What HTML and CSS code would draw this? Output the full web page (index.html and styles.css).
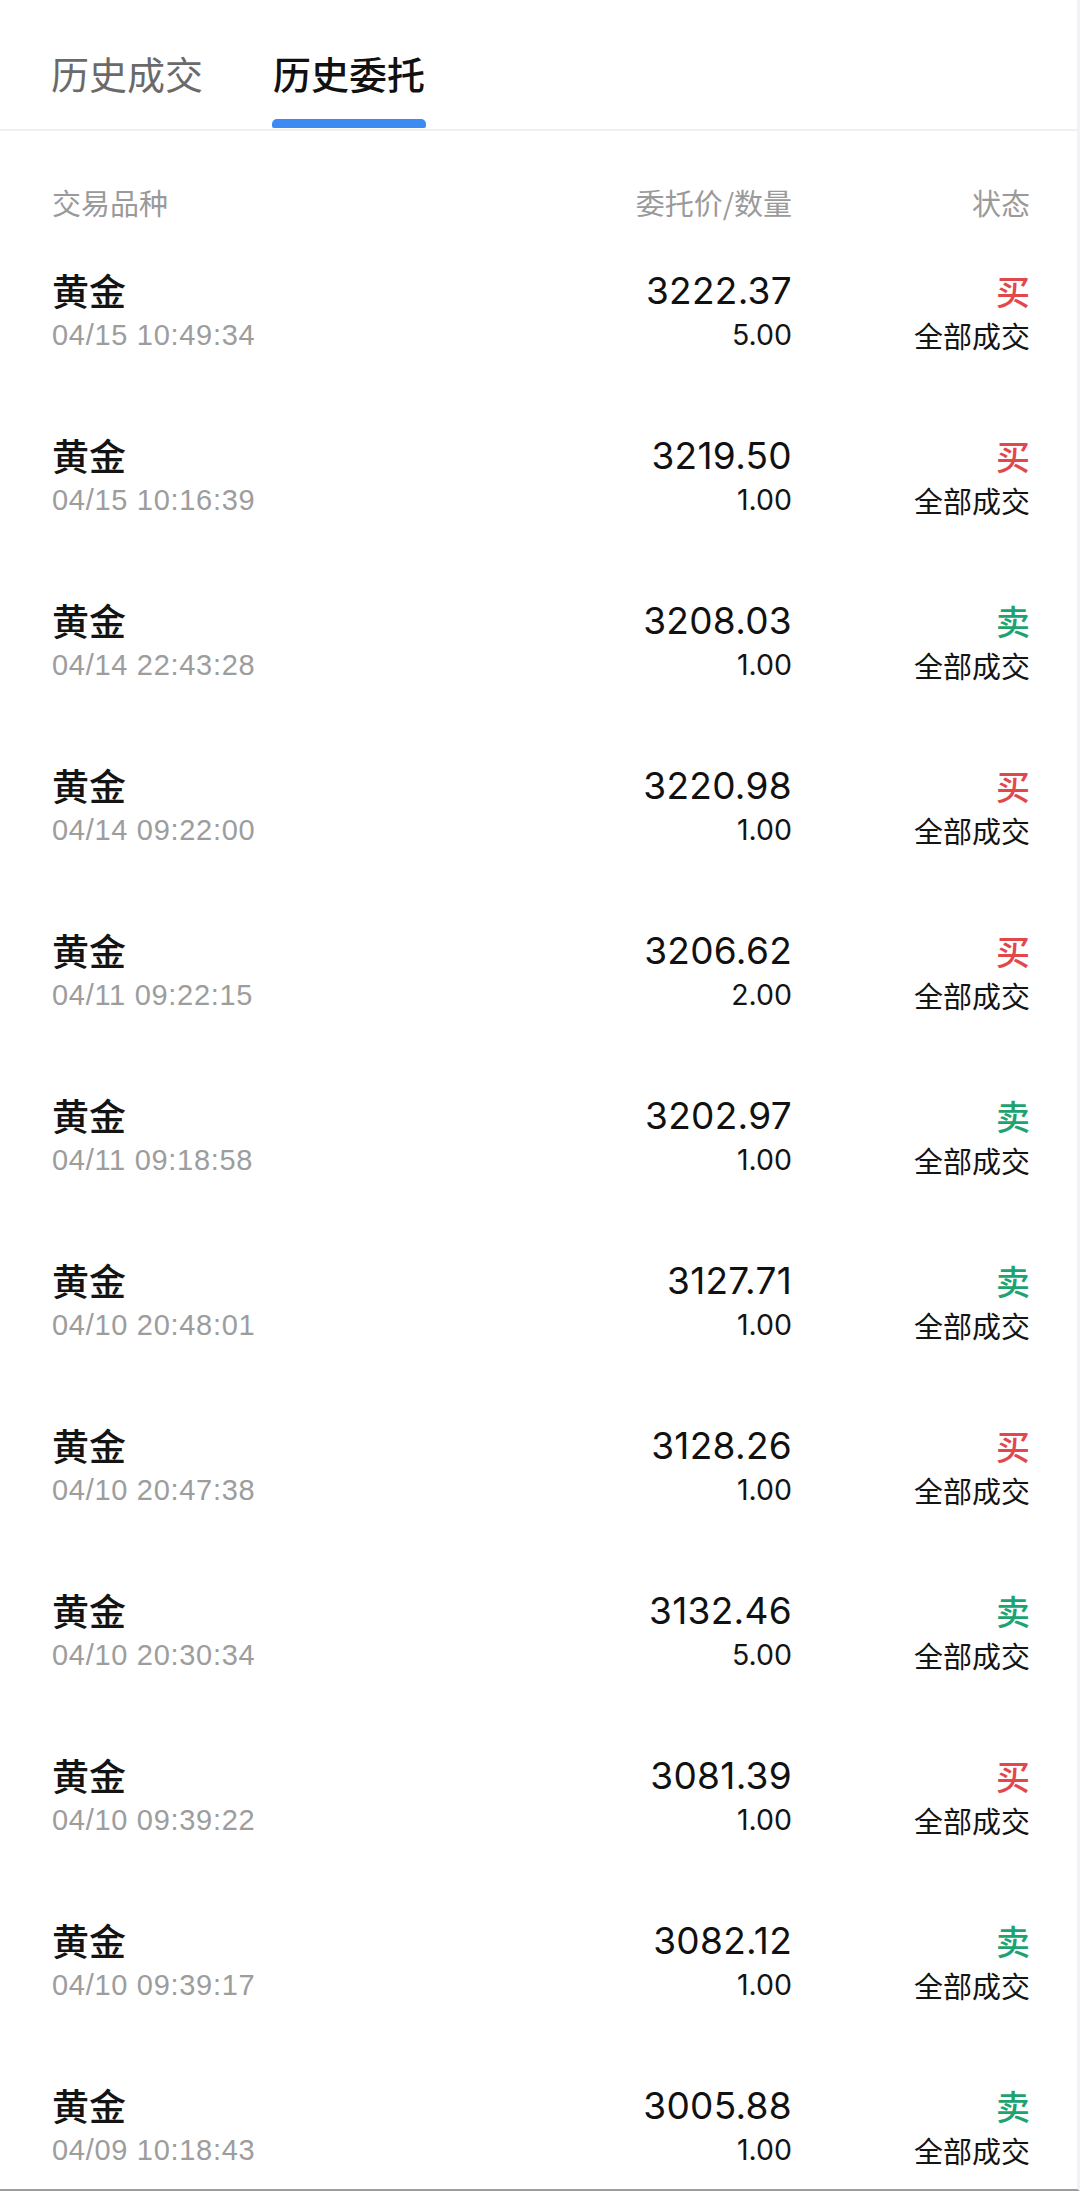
FILE: index.html
```html
<!DOCTYPE html>
<html lang="zh-CN">
<head>
<meta charset="utf-8">
<title>历史委托</title>
<link rel="stylesheet" href="styles.css">
</head>
<body>
<div class="page">
  <div class="tabs">
    <div class="tab"><span class="tab-label">历史成交</span></div>
    <div class="tab active"><span class="tab-label">历史委托</span><span class="tab-bar"></span></div>
  </div>
  <div class="list-head">
    <div class="col-name">交易品种</div>
    <div class="col-price">委托价/数量</div>
    <div class="col-status">状态</div>
  </div>
  <div class="list">
    <div class="row">
      <div class="name">黄金</div><div class="price">3222.37</div><div class="side buy">买</div>
      <div class="time">04/15 10:49:34</div><div class="qty">5.00</div><div class="state">全部成交</div>
    </div>
    <div class="row">
      <div class="name">黄金</div><div class="price">3219.50</div><div class="side buy">买</div>
      <div class="time">04/15 10:16:39</div><div class="qty">1.00</div><div class="state">全部成交</div>
    </div>
    <div class="row">
      <div class="name">黄金</div><div class="price">3208.03</div><div class="side sell">卖</div>
      <div class="time">04/14 22:43:28</div><div class="qty">1.00</div><div class="state">全部成交</div>
    </div>
    <div class="row">
      <div class="name">黄金</div><div class="price">3220.98</div><div class="side buy">买</div>
      <div class="time">04/14 09:22:00</div><div class="qty">1.00</div><div class="state">全部成交</div>
    </div>
    <div class="row">
      <div class="name">黄金</div><div class="price">3206.62</div><div class="side buy">买</div>
      <div class="time">04/11 09:22:15</div><div class="qty">2.00</div><div class="state">全部成交</div>
    </div>
    <div class="row">
      <div class="name">黄金</div><div class="price">3202.97</div><div class="side sell">卖</div>
      <div class="time">04/11 09:18:58</div><div class="qty">1.00</div><div class="state">全部成交</div>
    </div>
    <div class="row">
      <div class="name">黄金</div><div class="price">3127.71</div><div class="side sell">卖</div>
      <div class="time">04/10 20:48:01</div><div class="qty">1.00</div><div class="state">全部成交</div>
    </div>
    <div class="row">
      <div class="name">黄金</div><div class="price">3128.26</div><div class="side buy">买</div>
      <div class="time">04/10 20:47:38</div><div class="qty">1.00</div><div class="state">全部成交</div>
    </div>
    <div class="row">
      <div class="name">黄金</div><div class="price">3132.46</div><div class="side sell">卖</div>
      <div class="time">04/10 20:30:34</div><div class="qty">5.00</div><div class="state">全部成交</div>
    </div>
    <div class="row">
      <div class="name">黄金</div><div class="price">3081.39</div><div class="side buy">买</div>
      <div class="time">04/10 09:39:22</div><div class="qty">1.00</div><div class="state">全部成交</div>
    </div>
    <div class="row">
      <div class="name">黄金</div><div class="price">3082.12</div><div class="side sell">卖</div>
      <div class="time">04/10 09:39:17</div><div class="qty">1.00</div><div class="state">全部成交</div>
    </div>
    <div class="row">
      <div class="name">黄金</div><div class="price">3005.88</div><div class="side sell">卖</div>
      <div class="time">04/09 10:18:43</div><div class="qty">1.00</div><div class="state">全部成交</div>
    </div>
  </div>
</div>
</body>
</html>
```
FILE: styles.css
```css
html, body {
  margin: 0;
  padding: 0;
  background: #ffffff;
}

body {
  font-family: "Liberation Sans", "Noto Sans CJK SC", sans-serif;
  color: #141414;
}

.page {
  width: 1080px;
  height: 2191px;
  box-sizing: border-box;
  overflow: hidden;
  border-right: 3px solid #f2f2f4;
  border-bottom: 2px solid #9c9c9c;
  background: #ffffff;
}

/* Tabs */
.tabs {
  display: flex;
  gap: 66px;
  padding-left: 49px;
  height: 129px;
  border-bottom: 2px solid #f0f0f2;
  box-sizing: content-box;
}

.tab {
  display: flex;
  flex-direction: column;
  align-items: center;
  padding-top: 48px;
}

.tab-label {
  font-family: "Noto Sans CJK SC", sans-serif;
  font-size: 38px;
  line-height: 50px;
  color: #6a6a6a;
  padding: 0 2px;
}

.tab.active .tab-label {
  color: #111111;
  font-weight: 500;
}

.tab-bar {
  display: block;
  width: 154px;
  height: 9px;
  margin-top: 21px;
  background: #3b8bf3;
  border-radius: 5px 5px 2px 2px;
}

/* Column header */
.list-head {
  display: grid;
  grid-template-columns: 1fr 300px 238px;
  padding: 51px 47px 8px 52px;
  font-family: "Noto Sans CJK SC", sans-serif;
  font-size: 29px;
  line-height: 40px;
  color: #9a9a9a;
}

.col-price,
.col-status {
  text-align: right;
}

/* Rows */
.row {
  display: grid;
  grid-template-columns: 1fr 300px 238px;
  grid-template-rows: 45px 44px;
  padding: 38px 47px 38px 52px;
}

.name {
  font-family: "Noto Sans CJK SC", sans-serif;
  font-size: 37px;
  font-weight: 500;
  line-height: 45px;
  color: #141414;
}

.price {
  text-align: right;
  font-family: "Inter", "Liberation Sans", sans-serif;
  font-size: 37px;
  font-weight: 400;
  line-height: 45px;
  letter-spacing: 0.3px;
  color: #111111;
}

.side {
  text-align: right;
  font-family: "Noto Sans CJK SC", sans-serif;
  font-size: 34px;
  font-weight: 500;
  line-height: 45px;
}

.side.buy {
  color: #e2474c;
}

.side.sell {
  color: #1ca36f;
}

.time {
  font-family: "Liberation Sans", sans-serif;
  font-size: 29px;
  line-height: 44px;
  letter-spacing: 0.7px;
  color: #9d9d9d;
}

.qty {
  text-align: right;
  font-family: "Inter", "Liberation Sans", sans-serif;
  font-size: 28.5px;
  line-height: 44px;
  color: #141414;
}

.state {
  text-align: right;
  font-family: "Noto Sans CJK SC", sans-serif;
  font-size: 29px;
  line-height: 44px;
  color: #141414;
}
```
